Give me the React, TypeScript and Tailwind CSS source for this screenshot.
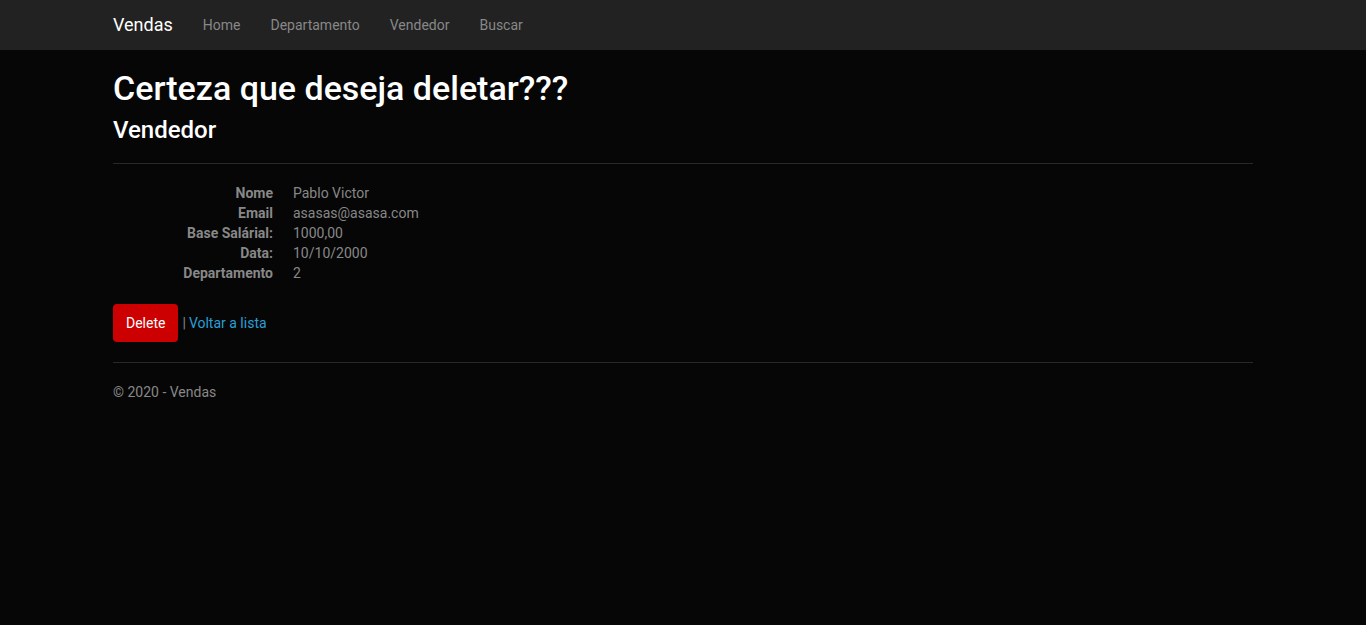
export default function App() {
	return (
		<div className="min-h-[625px] bg-[#060606] text-[#888] text-[14px] leading-[20px] font-['Roboto',sans-serif]">
			<nav className="h-[50px] bg-[#222]">
				<div className="w-[1170px] mx-auto px-[15px] flex items-center h-full">
					<a href="#" className="text-white text-[18px] leading-[20px] py-[15px] pr-[15px]">Vendas</a>
					<ul className="flex">
						<li><a href="#" className="block px-[15px] py-[15px] text-[#888]">Home</a></li>
						<li><a href="#" className="block px-[15px] py-[15px] text-[#888]">Departamento</a></li>
						<li><a href="#" className="block px-[15px] py-[15px] text-[#888]">Vendedor</a></li>
						<li><a href="#" className="block px-[15px] py-[15px] text-[#888]">Buscar</a></li>
					</ul>
				</div>
			</nav>
			<div className="w-[1170px] mx-auto px-[15px]">
				<h3 className="mt-5 mb-2.5 text-white font-medium text-[34px] leading-[1.1]">Certeza que deseja deletar???</h3>
				<div>
					<h4 className="text-white font-medium text-[24px] leading-[26px]">Vendedor</h4>
					<hr className="mt-5 mb-[19px] border-0 border-t border-[#282828]" />
					<dl className="grid grid-cols-[160px_1fr] gap-x-5 mb-[21px]">
						<dt className="text-right font-bold">Nome</dt>
						<dd>Pablo Victor</dd>
						<dt className="text-right font-bold">Email</dt>
						<dd>asasas@asasa.com</dd>
						<dt className="text-right font-bold">Base Salárial:</dt>
						<dd>1000,00</dd>
						<dt className="text-right font-bold">Data:</dt>
						<dd>10/10/2000</dd>
						<dt className="text-right font-bold">Departamento</dt>
						<dd>2</dd>
					</dl>
					<form className="flex items-center">
						<button type="button" className="bg-[#c00] text-white px-3 py-2 border border-transparent rounded-[4px] leading-[20px]">Delete</button>
						<span className="ml-1">|</span>
						<a href="#" className="ml-[3px] text-[#2a9fd6]">Voltar a lista</a>
					</form>
				</div>
				<hr className="mt-5 mb-[19px] border-0 border-t border-[#282828]" />
				<footer>
					<p>© 2020 - Vendas</p>
				</footer>
			</div>
		</div>
	);
}
